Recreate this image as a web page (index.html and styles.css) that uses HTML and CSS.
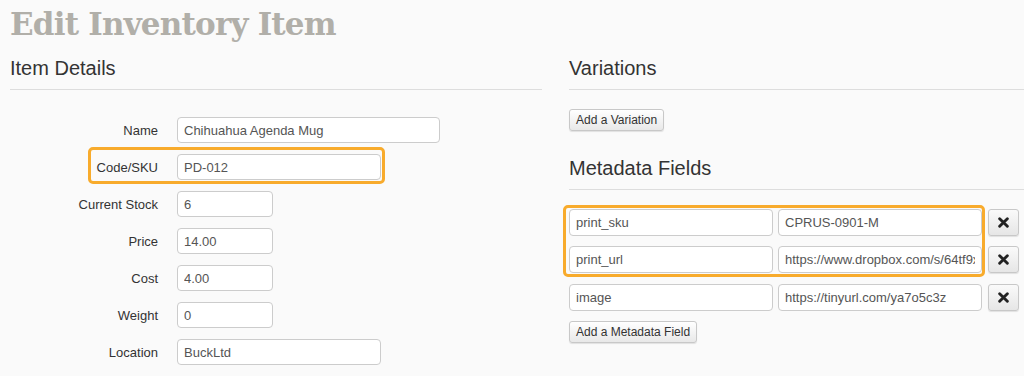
FILE: index.html
```html
<!DOCTYPE html>
<html lang="en">
<head>
    <meta charset="UTF-8">
    <meta name="viewport" content="width=device-width, initial-scale=1.0">
    <title>Edit Inventory Item</title>
    <link rel="stylesheet" href="styles.css">
</head>
<body>
    <h1 class="page-title">Edit Inventory Item</h1>

    <div class="columns">
        <section class="panel">
            <h2 class="panel-title">Item Details</h2>

            <div class="form-rows">
                <div class="field-row">
                    <label>Name</label>
                    <input class="input input-wide" type="text" value="Chihuahua Agenda Mug">
                </div>
                <div class="field-row highlight">
                    <label>Code/SKU</label>
                    <input class="input input-medium" type="text" value="PD-012">
                </div>
                <div class="field-row">
                    <label>Current Stock</label>
                    <input class="input input-small" type="text" value="6">
                </div>
                <div class="field-row">
                    <label>Price</label>
                    <input class="input input-small" type="text" value="14.00">
                </div>
                <div class="field-row">
                    <label>Cost</label>
                    <input class="input input-small" type="text" value="4.00">
                </div>
                <div class="field-row">
                    <label>Weight</label>
                    <input class="input input-small" type="text" value="0">
                </div>
                <div class="field-row">
                    <label>Location</label>
                    <input class="input input-medium" type="text" value="BuckLtd">
                </div>
            </div>
        </section>

        <section class="panel">
            <h2 class="panel-title">Variations</h2>
            <div class="panel-body">
                <button class="btn">Add a Variation</button>
            </div>

            <h2 class="panel-title">Metadata Fields</h2>
            <div class="panel-body">
                <!-- the two print_* rows are boxed in the screenshot -->
                <div class="meta-group highlight">
                    <div class="meta-row">
                        <input class="input meta-input" type="text" value="print_sku">
                        <input class="input meta-input" type="text" value="CPRUS-0901-M">
                        <button class="btn btn-remove"><svg width="11" height="11" viewBox="0 0 10 10"><path d="M1.5 1.5 L8.5 8.5 M8.5 1.5 L1.5 8.5" stroke="#222" stroke-width="2.6" stroke-linecap="round"/></svg></button>
                    </div>
                    <div class="meta-row">
                        <input class="input meta-input" type="text" value="print_url">
                        <input class="input meta-input" type="text" value="https://www.dropbox.com/s/64tf9xk2">
                        <button class="btn btn-remove"><svg width="11" height="11" viewBox="0 0 10 10"><path d="M1.5 1.5 L8.5 8.5 M8.5 1.5 L1.5 8.5" stroke="#222" stroke-width="2.6" stroke-linecap="round"/></svg></button>
                    </div>
                </div>
                <div class="meta-row">
                    <input class="input meta-input" type="text" value="image">
                    <input class="input meta-input" type="text" value="https://tinyurl.com/ya7o5c3z">
                    <button class="btn btn-remove"><svg width="11" height="11" viewBox="0 0 10 10"><path d="M1.5 1.5 L8.5 8.5 M8.5 1.5 L1.5 8.5" stroke="#222" stroke-width="2.6" stroke-linecap="round"/></svg></button>
                </div>
                <button class="btn btn-add-meta">Add a Metadata Field</button>
            </div>
        </section>
    </div>
</body>
</html>
```

FILE: styles.css
```css
body {
    font-family: "Liberation Sans", Arial, sans-serif;
    background-color: #fafafa;
    color: #333;
    margin: 0;
    padding: 0 10px;
    overflow: hidden;
}
.page-title {
    font-family: "DejaVu Serif", serif;
    font-weight: bold;
    font-size: 31px;
    line-height: 40px;
    color: #b1afa9;
    margin: 0;
    padding-top: 4px;
    letter-spacing: -0.8px;
}
.columns {
    display: flex;
    gap: 27px;
    width: 1100px;
}
.panel {
    width: 532px;
}
.panel-title {
    font-size: 20px;
    font-weight: normal;
    line-height: 24px;
    color: #333;
    margin: 0;
    padding: 12px 0 9px;
    border-bottom: 1px solid #ddd;
}
.form-rows {
    display: flex;
    flex-direction: column;
    gap: 11px;
    padding-top: 27px;
}
.field-row {
    display: flex;
    align-items: center;
    gap: 19px;
    position: relative;
}
.field-row label {
    width: 148px;
    text-align: right;
    font-size: 13px;
    color: #333;
}
.input {
    height: 26px;
    box-sizing: border-box;
    border: 1px solid #ccc;
    border-radius: 4px;
    background-color: #fff;
    font-family: "Liberation Sans", Arial, sans-serif;
    font-size: 13px;
    color: #555;
    padding: 0 6px;
    margin: 0;
}
.input-wide {
    width: 263px;
}
.input-medium {
    width: 204px;
}
.input-small {
    width: 96px;
}
/* orange annotation boxes */
.highlight {
    position: relative;
}
.highlight::before {
    content: "";
    position: absolute;
    border: 3px solid #f8ab2c;
    border-radius: 5px;
    pointer-events: none;
}
.field-row.highlight::before {
    left: 78px;
    top: -7px;
    width: 291px;
    height: 31px;
}
.meta-group.highlight::before {
    left: -6px;
    top: -4px;
    width: 416px;
    height: 66px;
}
.panel-body {
    padding-top: 19px;
    padding-bottom: 13px;
}
.btn {
    font-family: "Liberation Sans", Arial, sans-serif;
    font-size: 12px;
    color: #333;
    height: 22px;
    padding: 0 6px;
    border: 1px solid #c8c8c8;
    border-radius: 3px;
    background: linear-gradient(#fff, #e8e8e8);
    box-shadow: 0 1px 1px rgba(0, 0, 0, 0.1);
    cursor: pointer;
}
.meta-group {
    display: flex;
    flex-direction: column;
    gap: 10px;
    margin-bottom: 11px;
}
.meta-row {
    display: flex;
    align-items: center;
    gap: 5px;
}
.meta-input {
    width: 204px;
    height: 27px;
}
.btn-remove {
    width: 31px;
    height: 27px;
    margin-left: 1px;
    padding: 0;
    display: flex;
    align-items: center;
    justify-content: center;
    background: linear-gradient(#fafafa, #e6e6e6);
}
.btn-add-meta {
    margin-top: 10px;
}
```
